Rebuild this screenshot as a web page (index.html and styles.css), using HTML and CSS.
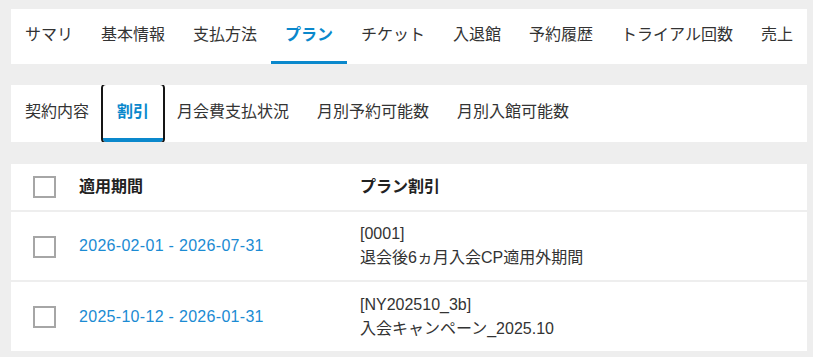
FILE: index.html
```html
<!DOCTYPE html>
<html>
 <head>
  <meta charset="utf-8">
  <title>プラン割引</title>
  <link rel="stylesheet" href="styles.css">
 </head>
 <body>
  <div class="page">
    <ul class="mainTabs">
      <li>サマリ</li>
      <li>基本情報</li>
      <li>支払方法</li>
      <li class="active">プラン</li>
      <li>チケット</li>
      <li>入退館</li>
      <li>予約履歴</li>
      <li>トライアル回数</li>
      <li>売上</li>
    </ul>

    <ul class="subTabs">
      <li>契約内容</li>
      <li class="active">割引</li>
      <li>月会費支払状況</li>
      <li>月別予約可能数</li>
      <li>月別入館可能数</li>
    </ul>

    <table class="list">
      <thead>
        <tr>
          <th class="check"><span class="box"></span></th>
          <th class="period">適用期間</th>
          <th>プラン割引</th>
        </tr>
      </thead>
      <tbody>
        <tr>
          <td class="check"><span class="box"></span></td>
          <td class="period"><a>2026-02-01 - 2026-07-31</a></td>
          <td>[0001]<br>退会後6ヵ月入会CP適用外期間</td>
        </tr>
        <tr>
          <td class="check"><span class="box"></span></td>
          <td class="period"><a>2025-10-12 - 2026-01-31</a></td>
          <td>[NY202510_3b]<br>入会キャンペーン_2025.10</td>
        </tr>
      </tbody>
    </table>
  </div>
 </body>
</html>
```

FILE: styles.css
```css
* {
  margin: 0;
  padding: 0;
  box-sizing: border-box;
}
body {
  background: #eeeeee;
  font-family: "Liberation Sans", "Noto Sans CJK JP", sans-serif;
  font-size: 16px;
  color: #333;
}
.page {
  padding: 9px 6px 0 11px;
}
ul {
  list-style: none;
}

.mainTabs,
.subTabs {
  display: flex;
  background: #fff;
  overflow: hidden;
}
.mainTabs li,
.subTabs li {
  display: flex;
  align-items: center;
  padding: 0 14px;
  white-space: nowrap;
  line-height: 24px;
}

.mainTabs {
  height: 55px;
}
.mainTabs li {
  border-bottom: 3px solid transparent;
}
.mainTabs li.active {
  color: #0a88cc;
  font-weight: bold;
  border-bottom-color: #0a88cc;
}

.subTabs {
  height: 57px;
  margin-top: 21px;
}
.subTabs li {
  border-bottom: 4px solid transparent;
}
.subTabs li.active {
  color: #0a88cc;
  font-weight: bold;
  border-bottom-color: #0a88cc;
  outline: 2px solid #151515;
  border-radius: 3px;
}

.list {
  width: 100%;
  margin-top: 22px;
  background: #fff;
  border-collapse: collapse;
}
.list th,
.list td {
  text-align: left;
  vertical-align: middle;
  line-height: 24px;
}
.list th {
  height: 47px;
  font-weight: bold;
  color: #222;
}
.list td {
  height: 70px;
  padding: 10px 0;
  border-top: 2px solid #eeeeee;
}
.list .check {
  width: 68px;
  padding-left: 22px;
}
.list .period {
  width: 281px;
}
.box {
  display: block;
  width: 23px;
  height: 22px;
  border: 2px solid #a6a6a6;
  background: #fff;
}
.list td.check .box {
  margin-top: 1px;
}
.period a {
  color: #1b8bd3;
  letter-spacing: 0.3px;
}
```
